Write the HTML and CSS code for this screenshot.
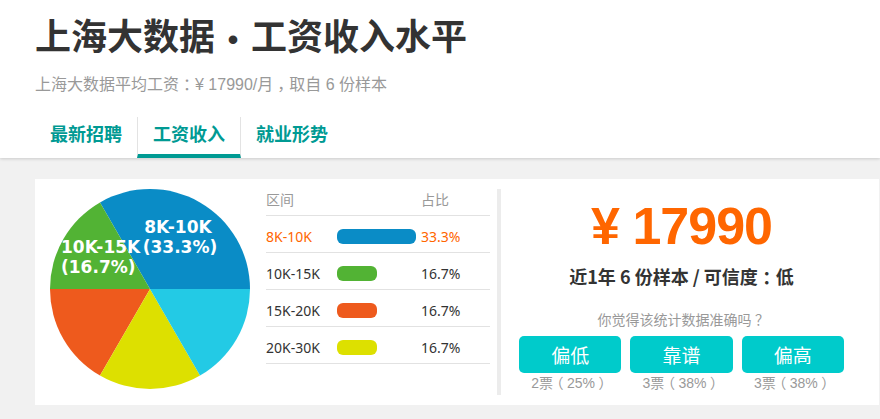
FILE: index.html
```html
<!DOCTYPE html>
<html lang="zh-CN">
<head>
<meta charset="utf-8">
<title>上海大数据·工资收入水平</title>
<link rel="stylesheet" href="styles.css">
</head>
<body>
<header class="head">
  <h1 class="title">上海大数据<span class="dot">•</span>工资收入水平</h1>
  <p class="sub">上海大数据平均工资<span class="p">：</span>¥ 17990/月<span class="p">，</span>取自 6 份样本</p>
  <nav class="tabs">
    <a class="tab">最新招聘</a>
    <a class="tab active">工资收入</a>
    <a class="tab">就业形势</a>
  </nav>
</header>
<main class="main">
  <section class="card">
    <div class="chart">
      <svg class="pie" width="200" height="201" viewBox="0 0 200 201">
        <path d="M100,100 L200,100 A100,100 0 0 0 50,13.4 Z" fill="#0a8cc6"/>
        <path d="M100,100 L50,13.4 A100,100 0 0 0 0,100 Z" fill="#52b334"/>
        <path d="M100,100 L0,100 A100,100 0 0 0 50,186.6 Z" fill="#ee5a1d"/>
        <path d="M100,100 L50,186.6 A100,100 0 0 0 150,186.6 Z" fill="#dde000"/>
        <path d="M100,100 L150,186.6 A100,100 0 0 0 200,100 Z" fill="#23cae5"/>
        <g class="pie-label">
          <text x="128" y="44" text-anchor="middle">8K-10K</text>
          <text x="130" y="64" text-anchor="middle">(33.3%)</text>
          <text x="11" y="64">10K-15K</text>
          <text x="11" y="84">(16.7%)</text>
        </g>
      </svg>
    </div>
    <div class="dist">
      <div class="dist-head"><span>区间</span><span></span><span>占比</span></div>
      <div class="dist-row hot"><span>8K-10K</span><span class="bar" style="width:79px;background:#0a8cc6"></span><span>33.3%</span></div>
      <div class="dist-row"><span>10K-15K</span><span class="bar" style="width:40px;background:#52b334"></span><span>16.7%</span></div>
      <div class="dist-row"><span>15K-20K</span><span class="bar" style="width:40px;background:#ee5a1d"></span><span>16.7%</span></div>
      <div class="dist-row"><span>20K-30K</span><span class="bar" style="width:40px;background:#dde000"></span><span>16.7%</span></div>
    </div>
    <div class="divider"></div>
    <div class="summary">
      <div class="amount">¥ 17990</div>
      <div class="meta">近1年 6 份样本 / 可信度<span class="p">：</span>低</div>
      <div class="ask">你觉得该统计数据准确吗<span class="p">？</span></div>
      <div class="votes">
        <div class="vote"><button class="btn">偏低</button><span class="count">2票<span class="p">（</span>25%<span class="p">）</span></span></div>
        <div class="vote"><button class="btn">靠谱</button><span class="count">3票<span class="p">（</span>38%<span class="p">）</span></span></div>
        <div class="vote"><button class="btn">偏高</button><span class="count">3票<span class="p">（</span>38%<span class="p">）</span></span></div>
      </div>
    </div>
  </section>
</main>
</body>
</html>
```

FILE: styles.css
```css
* { box-sizing: border-box; }
html, body { margin: 0; padding: 0; }
body {
  background: #f1f1f1;
  font-family: "Noto Sans", "Noto Sans CJK SC", sans-serif;
  color: #333;
  overflow: hidden;
}
.head {
  background: #fff;
  padding: 9px 0 0 35px;
  box-shadow: 0 1px 3px rgba(0,0,0,0.16);
  position: relative;
}
.title {
  margin: 0;
  height: 50px;
  font-family: "Noto Sans CJK SC", sans-serif;
  font-size: 36px;
  font-weight: 700;
  line-height: 50px;
  color: #333;
}
.dot {
  display: inline-block;
  width: 36px;
  line-height: 1;
  text-align: center;
  font-family: "Liberation Sans", sans-serif;
  font-size: 30px;
}
.p {
  display: inline-block;
  width: 1em;
  line-height: 1;
  text-align: center;
  font-family: "Noto Sans CJK SC", sans-serif;
  font-feature-settings: "halt";
}
.sub {
  margin: 16px 0 0;
  height: 20px;
  font-family: "Liberation Sans", "Noto Sans CJK SC", sans-serif;
  font-size: 16px;
  line-height: 20px;
  color: #999;
}
.tabs {
  display: flex;
  margin-top: 22px;
}
.tab {
  display: block;
  padding: 0 15px 4px;
  line-height: 33px;
  height: 41px;
  font-family: "Noto Sans CJK SC", sans-serif;
  font-size: 18px;
  font-weight: 700;
  color: #009a93;
  border-bottom: 4px solid transparent;
}
.tab.active {
  border-left: 1px solid #e3e3e3;
  border-right: 1px solid #e3e3e3;
  border-bottom-color: #009a93;
}
.main {
  padding: 21px 0 20px 35px;
}
.card {
  width: 844px;
  height: 226px;
  background: #fff;
  padding: 10px 0;
  display: flex;
  align-items: flex-start;
}
.chart {
  margin-left: 15px;
  width: 200px;
  height: 201px;
}
.pie { display: block; }
.pie-label text {
  font-family: "DejaVu Sans", sans-serif;
  font-weight: 700;
  font-size: 17px;
  fill: #fff;
}
.dist {
  margin-left: 16px;
  width: 224px;
  font-size: 14px;
}
.dist-head, .dist-row {
  display: grid;
  grid-template-columns: 71px 84px 1fr;
  border-bottom: 1px solid #e2e2e2;
}
.dist-head {
  height: 27px;
  line-height: 22px;
  color: #999;
}
.dist-row {
  height: 37px;
  padding-top: 4px;
  align-items: center;
  color: #333;
}
.dist-row.hot { color: #ff6600; }
.bar {
  display: block;
  height: 15px;
  border-radius: 6px;
}
.divider {
  margin-left: 7px;
  width: 4px;
  height: 206px;
  background: #ececec;
}
.summary {
  margin-left: 18px;
  width: 325px;
  text-align: center;
}
.amount {
  margin-top: 7px;
  height: 60px;
  font-family: "Liberation Sans", sans-serif;
  font-weight: 700;
  font-size: 52px;
  letter-spacing: -1px;
  line-height: 60px;
  color: #ff6600;
}
.meta {
  margin-top: 8px;
  height: 24px;
  font-family: "Noto Sans CJK SC", sans-serif;
  font-weight: 700;
  font-size: 18px;
  line-height: 24px;
  color: #333;
}
.ask {
  margin-top: 22px;
  height: 20px;
  font-size: 14px;
  line-height: 20px;
  color: #999;
}
.votes {
  margin-top: 6px;
  display: grid;
  grid-template-columns: repeat(3, 1fr);
  column-gap: 9px;
}
.vote {
  display: flex;
  flex-direction: column;
  align-items: stretch;
}
.btn {
  display: block;
  height: 37px;
  border: 0;
  border-radius: 5px;
  background: #00cbcb;
  color: #fff;
  font-family: "Noto Sans CJK SC", sans-serif;
  font-size: 19px;
  line-height: 37px;
  padding: 0;
}
.count {
  margin-top: 1px;
  height: 18px;
  font-family: "Liberation Sans", "Noto Sans CJK SC", sans-serif;
  font-size: 14px;
  line-height: 18px;
  color: #999;
}
```
